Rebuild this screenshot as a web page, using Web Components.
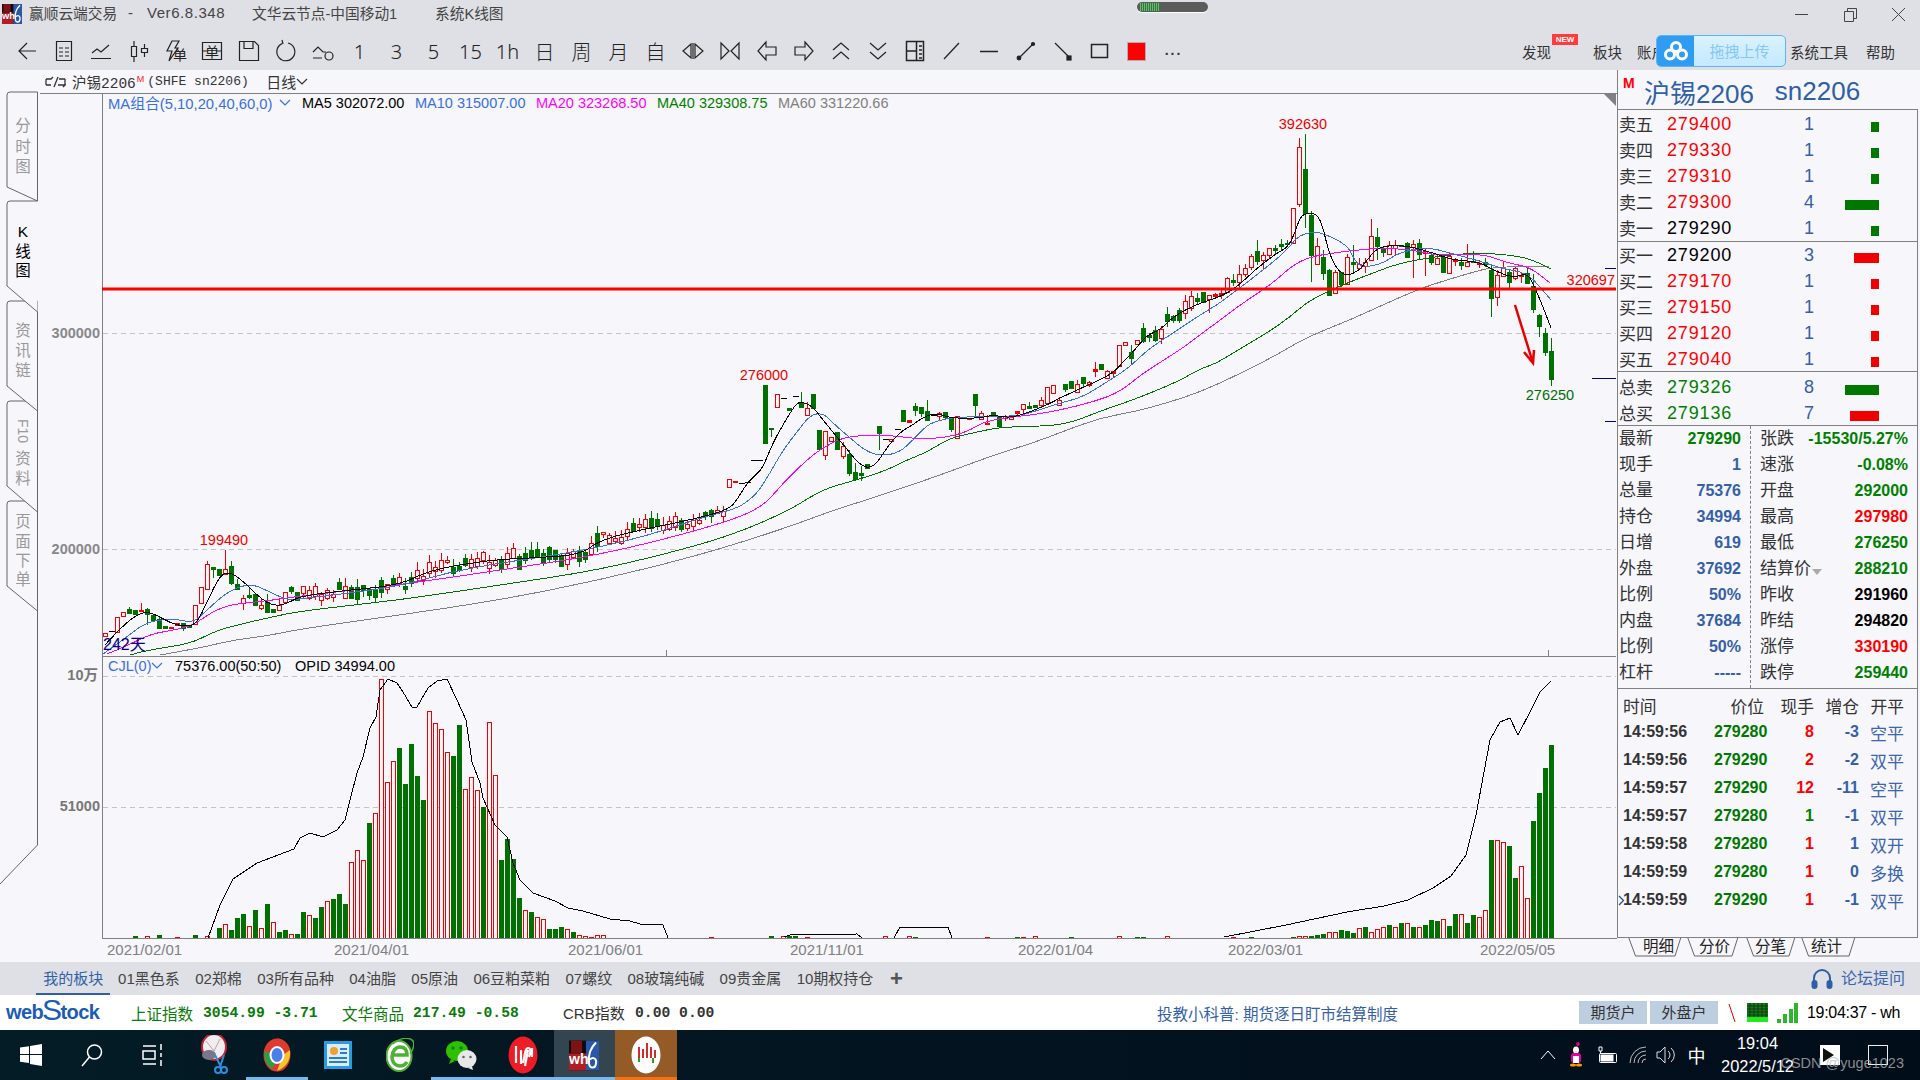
<!DOCTYPE html>
<html lang="zh">
<head>
<meta charset="utf-8">
<title>赢顺云端交易</title>
<style>
  html, body { margin: 0; padding: 0; }
  body {
    width: 1920px;
    height: 1080px;
    overflow: hidden;
    display: flex;
    flex-direction: column;
    background: #f6f6fb;
    font-family: "Liberation Sans", "Noto Sans CJK SC", sans-serif;
  }
  .work { display: flex; height: 892px; }
  .center { width: 1577px; display: flex; flex-direction: column; }
</style>
</head>
<body>
  <title-bar></title-bar>
  <tool-bar></tool-bar>
  <div class="work">
    <side-tabs></side-tabs>
    <div class="center">
      <symbol-bar></symbol-bar>
      <kline-chart></kline-chart>
    </div>
    <quote-panel></quote-panel>
  </div>
  <board-bar></board-bar>
  <status-bar></status-bar>
  <task-bar></task-bar>

<script>
const FONT = '"Liberation Sans", "Noto Sans CJK SC", sans-serif';

const WH_LOGO = (w, h) => `
  <svg width="${w}" height="${h}" viewBox="0 0 30 30">
    <rect width="30" height="30" fill="#0d0d10"/>
    <rect x="0" y="13" width="17" height="17" fill="#b01d22"/>
    <rect x="2" y="0" width="11" height="13" fill="#7a1216"/>
    <path d="M17 0h13v30H17z" fill="#2a57a8"/>
    <path d="M27 2c-5 5-8 12-7 20 0 6 6 7 7 1 1-5-3-7-6-4" fill="none" stroke="#fff" stroke-width="2"/>
    <text x="0" y="23" font-family="Liberation Sans" font-weight="700" font-size="14" fill="#fff">wh</text>
  </svg>`;

class TitleBar extends HTMLElement {
  constructor() {
    super();
    this.shadowDOM = this.attachShadow({ mode: 'open' });
  }

  connectedCallback() {
    this.render();
  }

  render() {
    this.shadowDOM.innerHTML = `
      <style>
        :host {
          display: flex;
          align-items: center;
          height: 35px;
          background: #dfe0e5;
          color: #444;
          font: 15px ${FONT};
          position: relative;
        }
        .logo { margin: -7px 7px 0 2px; display: flex; }
        .item { margin-top: -11px; white-space: nowrap; }
        .pill {
          position: absolute; left: 1137px; top: 2px;
          width: 71px; height: 10px; border-radius: 5px;
          background: #5b5b5b; display: flex; align-items: center; padding-left: 3px;
          box-sizing: border-box; box-shadow: 0 1px 1px #fff;
        }
        .pill i { width: 1px; height: 8px; background: #3fd452; margin-right: 1px; }
        .win { position: absolute; top: 7px; right: 15px; display: flex; }
        .win svg { display: block; }
      </style>
      <span class="logo">${WH_LOGO(20, 20)}</span>
      <span class="item" style="width:99px;font-size:14.7px">赢顺云端交易</span>
      <span class="item" style="width:19px">-</span>
      <span class="item" style="width:105px;letter-spacing:.55px">Ver6.8.348</span>
      <span class="item" style="width:183px;font-size:14.7px">文华云节点-中国移动1</span>
      <span class="item" style="font-size:14.7px">系统K线图</span>
      <div class="pill">${'<i></i>'.repeat(10)}</div>
      <div class="win">
        <svg width="110" height="16" viewBox="0 0 110 16" fill="none" stroke="#444">
          <path d="M0 7.5h13"/>
          <path d="M49.5 4.5h9v10h-9zM52.5 4.5v-3h9v10h-3"/>
          <path d="M97 1l13 13M110 1L97 14"/>
        </svg>
      </div>`;
  }
}
customElements.define('title-bar', TitleBar);

const ICONS = {
  back: '<path d="M21 12H4M12 4l-8 8 8 8"/>',
  list: '<path d="M4.500 2.500h15v19h-15zM7 9h4M13 9h4M7 13h4M13 13h4M7 17h4M13 17h4"/>',
  line: '<path d="M3 14l5-4 4 3 8-7M2 19.500h20"/>',
  candle: '<path d="M5.500 7.500h5v10h-5zM8 2v5M8 18v5M15.500 9.500h6v4h-6zM18.500 5v4M18.500 14v4"/>',
  flash: '<path d="M9 2h7l-4 7h3l-9 13 3-10H4z"/>',
  box: '<path d="M2.500 3.500h19v17h-19zM2.500 12H8M16 12h5.500"/>',
  save: '<path d="M2.500 2.500h15l4 4v15h-19zM7 2.500v7h9v-7M2.500 21.500h19"/>',
  refresh: '<path d="M14 4a9 9 0 1 1-6 .600M8 1l1 4"/>',
  swap: '<path d="M2 13l5-5 5 5h3M2 19h9"/><circle cx="18" cy="17" r="4"/>',
  tri1: '<path d="M10 5L2 12l8 7zM14 5l8 7-8 7zM12 4v16"/>',
  tri2: '<path d="M3 4l8 8-8 8zM21 4l-8 8 8 8z"/>',
  left: '<path d="M11 3l-8 9 8 9v-5h10V8H11z"/>',
  right: '<path d="M13 3l8 9-8 9v-5H3V8h10z"/>',
  up: '<path d="M4 11l8-7 8 7M4 20l8-7 8 7"/>',
  down: '<path d="M4 4l8 7 8-7M4 13l8 7 8-7"/>',
  split: '<path d="M3.500 2.500h17v19h-17zM13.500 2.500v19M3.500 12h10M16 7h3M16 11h3M16 15h3M16 19h3" stroke-width="1.500"/>',
  slash: '<path d="M4 20L19 4"/>',
  dash: '<path d="M3 12.500h18" stroke-width="1.500"/>',
  seg: '<path d="M5 19L19 5"/><circle cx="5" cy="19" r="1.800" fill="#222"/><circle cx="19" cy="5" r="1.500" fill="#222"/>',
  arrow: '<path d="M4 4l15 15"/><rect x="16" y="17" width="4" height="4" fill="#222"/>',
  rect: '<path d="M3.500 5.500h16v13h-16z" stroke-width="1.500"/>'
};

class ToolBar extends HTMLElement {
  constructor() {
    super();
    this.shadowDOM = this.attachShadow({ mode: 'open' });
  }

  connectedCallback() {
    this.render();
  }

  icon(name) {
    return `<div class="btn"><svg width="24" height="24" viewBox="0 0 24 24" fill="none" stroke="#222" stroke-width="1.200">${ICONS[name]}</svg></div>`;
  }

  glyph(name, inner) {
    return `<div class="btn"><svg width="24" height="24" viewBox="0 0 24 24" fill="none" stroke="#222" stroke-width="1.200">${ICONS[name]}<text x="${name === 'flash' ? 10 : 5}" y="${name === 'flash' ? 21 : 18}" font-size="14" font-family="Noto Sans CJK SC" fill="#222" stroke="none">${inner}</text></svg></div>`;
  }

  render() {
    const periods = ['1', '3', '5', '15', '1h', '日', '周', '月', '自'];
    const after = ['tri1', 'tri2', 'left', 'right', 'up', 'down', 'split', 'slash', 'dash', 'seg', 'arrow', 'rect'];
    this.shadowDOM.innerHTML = `
      <style>
        :host {
          display: flex;
          align-items: center;
          height: 35px;
          background: #dfe0e5;
          padding: 0 0 3px 8px;
          box-sizing: border-box;
          position: relative;
          color: #333;
        }
        .btn { width: 37px; height: 30px; display: flex; align-items: center; justify-content: center; flex: none; }
        .txt { font: 300 20px "Noto Sans", "Noto Sans CJK SC", sans-serif; color: #222; }
        .red { width: 17px; height: 17px; background: #ff0000; border: 1px solid #b0b0b0; }
        .dots { font: 700 14px ${FONT}; letter-spacing: 2px; margin-top: -2px; }
        .menu { margin-left: auto; display: flex; font: 14.5px ${FONT}; padding-right: 25px; }
        .menu span { white-space: nowrap; }
        .new {
          position: absolute; left: 1552px; top: -1px; width: 26px; height: 11px;
          background: #ff3b3b; color: #fff; font: 700 8px/11px ${FONT}; text-align: center;
        }
        .upload {
          position: absolute; left: 1656px; top: 0; width: 130px; height: 32px;
          box-sizing: border-box; border: 1px solid #5fb4f5; border-radius: 5px; background: linear-gradient(#d9f2ff, #c4e9ff);
          display: flex; overflow: hidden;
        }
        .upload .side { width: 37px; background: #2f9cf4; display: flex; align-items: center; justify-content: center; }
        .upload .label { flex: 1; color: #86c8f7; font: 15px ${FONT}; text-align: center; line-height: 31px; }
      </style>
      ${['back', 'list', 'line', 'candle'].map(n => this.icon(n)).join('')}
      ${this.glyph('flash', '单')}
      ${this.glyph('box', '单')}
      ${['save', 'refresh', 'swap'].map(n => this.icon(n)).join('')}
      ${periods.map(p => `<div class="btn txt">${p}</div>`).join('')}
      ${after.map(n => this.icon(n)).join('')}
      <div class="btn"><div class="red"></div></div>
      <div class="btn dots">...</div>
      <div class="menu">
        <span style="margin-right:42px">发现</span>
        <span style="margin-right:15px">板块</span>
        <span style="margin-right:124px">账户</span>
        <span style="margin-right:18px">系统工具</span>
        <span>帮助</span>
      </div>
      <div class="new">NEW</div>
      <div class="upload">
        <div class="side">
          <svg width="24" height="20" viewBox="0 0 24 20" fill="none" stroke="#fff" stroke-width="3">
            <circle cx="12" cy="6" r="4.500"/><circle cx="6" cy="13.500" r="4.500"/><circle cx="18" cy="13.500" r="4.500"/>
          </svg>
        </div>
        <div class="label">拖拽上传</div>
      </div>`;
  }
}
customElements.define('tool-bar', ToolBar);

class SideTabs extends HTMLElement {
  constructor() {
    super();
    this.shadowDOM = this.attachShadow({ mode: 'open' });
  }

  connectedCallback() {
    this.render();
  }

  tab(top, leftEnd, slantEnd, active) {
    const t = top - 70, l = leftEnd - 70, b = slantEnd - 70;
    const path = active
      ? `M37.500 ${t}H10q-3 0-3 3V${l}L37.500 ${b}`
      : `M37.500 ${b}V${t}H10q-3 0-3 3V${l}L37.500 ${b}`;
    return `<path d="${path}" fill="#f6f6fb" stroke="#666"/>`;
  }

  label(chars, active) {
    return chars.map(([c, y]) =>
      `<text x="23" y="${y - 70 + 6}" text-anchor="middle" font-size="15.500" font-family="Liberation Sans, Noto Sans CJK SC" fill="${active ? '#000' : '#999'}">${c}</text>`
    ).join('');
  }

  render() {
    this.shadowDOM.innerHTML = `
      <style>
        :host { display: block; width: 40px; height: 892px; flex: none; }
        svg { display: block; }
      </style>
      <svg width="40" height="892" viewBox="0 0 40 892">
        ${this.tab(92, 187, 201)}
        ${this.tab(501, 586, 611)}
        ${this.tab(401, 486, 512)}
        ${this.tab(301, 386, 411)}
        ${this.tab(201, 286, 312, true)}
        <path d="M37.500 541V775L0 814" fill="none" stroke="#666"/>
        ${this.label([['分', 125], ['时', 146], ['图', 166]])}
        ${this.label([['K', 231], ['线', 251], ['图', 270]], true)}
        ${this.label([['资', 330], ['讯', 350], ['链', 370]])}
        <text x="0" y="0" transform="translate(18 349) rotate(90)" font-size="14" font-family="Liberation Sans" fill="#999">F10</text>
        ${this.label([['资', 458], ['料', 478]])}
        ${this.label([['页', 521], ['面', 541], ['下', 560], ['单', 579]])}
      </svg>`;
  }
}
customElements.define('side-tabs', SideTabs);

class SymbolBar extends HTMLElement {
  constructor() {
    super();
    this.shadowDOM = this.attachShadow({ mode: 'open' });
  }

  connectedCallback() {
    this.render();
  }

  render() {
    this.shadowDOM.innerHTML = `
      <style>
        :host {
          display: flex;
          align-items: center;
          height: 24px;
          box-sizing: border-box;
          border-bottom: 1px solid #808080;
          padding-left: 5px;
          color: #333;
          font: 14.500px "Liberation Mono", "Noto Sans CJK SC", monospace;
          white-space: nowrap;
        }
        sup { color: #ff2020; font: 9px ${FONT}; margin: -6px 0 0 1px; }
        .mono { font-size: 13px; margin-left: 3px; width: 119px; }
        .per { font: 15px ${FONT}; }
      </style>
      <svg width="21" height="12" viewBox="0 0 21 12" fill="none" stroke="#333" stroke-width="1.300" style="margin-right:6px">
        <path d="M1 3h5l2-2M1 9h5M1 3v6M20 3v6M14 3h6M13 9h7l-2 2M9 11l4-10"/>
      </svg>
      <span>沪锡2206</span><sup>M</sup><span class="mono">(SHFE sn2206)</span>
      <span class="per">日线</span>
      <svg width="12" height="7" viewBox="0 0 12 7" fill="none" stroke="#333" stroke-width="1.200"><path d="M1 1l5 5 5-5"/></svg>`;
  }
}
customElements.define('symbol-bar', SymbolBar);

/* candles read off the reference, in crop units: [type, top, bottom, wickTop, wickBottom] */
const HEAD = [
  ['r',1470,1480],['d',1465,1465],['r',1430,1468],['r',1415,1426],['g',1408,1420,1402,1422],['g',1412,1422],
  ['f',1412,1414,1393,1415],['g',1408,1422,1405,1450],['g',1423,1437],['g',1435,1457,1430,1460],['g',1453,1457],
  ['r',1455,1459],['r',1444,1450],['g',1446,1458,1446,1465],['g',1450,1455],['r',1398,1448],['r',1352,1392],
  ['r',1292,1357,1282,1357],['g',1298,1305,1298,1328],['g',1304,1320],['r',1303,1318,1253,1320],['g',1297,1340,1282,1345],
  ['g',1343,1355,1330,1360],['r',1379,1394,1372,1410],['g',1373,1378,1350,1382],['g',1370,1398],['r',1398,1405,1380,1410],
  ['g',1391,1415,1370,1418],['g',1408,1415],['r',1398,1410,1380,1410],['r',1363,1390],['g',1352,1362,1348,1370],['g',1363,1385]
];
const MIDDLE = [
  ['r',388,412],['f',392,395],['d',400,400],['d',395,395],['d',330,330],['d',330,330],['g',105,278],['g',234,238,234,260],
  ['r',133,172],['d',145,145],['g',174,179],['d',139,139],['g',155,171,127,171],['r',175,196,155,197],['g',132,175,132,178],
  ['g',240,296],['r',244,316,244,330],['r',262,272],['g',246,296],['r',289,319,275,328],['g',312,368,300,378],
  ['g',366,388,340,390],['g',369,374,348,392],['g',342,353],null,['g',228,248,228,300],['d',268,268],['r',268,274],
  ['d',238,238],['g',180,212],['f',210,215],['g',168,179,158,198],['g',171,188,171,200],['g',183,210,150,213],['d',195,195],
  ['r',188,197,185,210],['g',187,200,185,210],['g',205,236,200,246],['r',199,265,198,267],['d',205,205],['f',203,207],
  ['g',132,164,132,200],['r',188,208,182,210],['f',218,220,195,222],['g',187,194],['g',197,228],['r',197,203,195,212],
  ['r',202,208],['f',184,188,184,200],['r',163,178,163,188],['g',168,173,155,178],['g',165,172],['r',150,166,140,170],
  ['r',112,158],['r',106,130],['r',149,165,140,168],['g',102,117,102,127],['g',94,113],['r',103,127,90,128],['g',81,98,81,112],
  ['r',97,105,93,110],['f',58,62,37,80],['g',42,57],['r',64,85,60,87],['f',64,68,64,85],['r',-15,47],['r',-25,-15]
];
const TAIL = [
  ['g',547,575],['r',555,568,555,610],['f',553,557,548,568],['f',549,555,540,566],['r',503,545,500,548],['g',511,515,492,528],
  ['r',493,516,465,530],['r',475,491,463,500],['r',439,472,432,480],['g',424,454,390,465],['r',436,449,425,480],['r',415,436,413,445],
  ['g',414,419,405,435],['g',403,407,388,422],['g',399,403,390,410],['r',295,400,293,402],['r',112,283,85,290],['g',177,310,72,355],
  ['g',315,435,302,515],['r',409,463,385,465],['g',441,490,420,510],['g',480,554,478,556],['r',487,550,480,552],['g',487,522,485,530],
  ['r',442,521,433,525],['g',456,461,405,485],['r',461,475,445,480],['r',455,467,445,488],['r',379,451,327,453],['g',381,408,353,450],
  ['g',417,425,410,440],['r',405,433,392,435],['r',404,414,390,437],['g',404,408],['g',399,440,395,442],['r',401,411,390,503],
  ['g',400,431,388,447],['r',424,430,418,497],['g',435,455,430,465],['r',444,463,435,465],['g',442,487,435,490],['r',439,490,428,492],
  ['f',448,453,443,468],['g',455,464,445,480],['r',456,469,402,470],['g',452,457,422,460],['f',459,463,450,475],['g',456,463,445,470],
  ['g',480,563,465,620],['r',496,562,480,588],['r',470,497,455,500],['g',487,515,480,535],['r',475,503,468,510],['f',495,499,485,520],
  ['g',490,518,468,520],['g',527,598,492,610],['g',615,647,612,680],['g',670,725,655,737],['g',723,806,685,828]
];

const MA5 = [[105,645],[123,625],[143,611],[157,615],[170,623],[187,627],[197,623],[207,602],[220,575],[230,572],[243,581],[260,598],[273,606],[287,604],[300,596],[350,590],[400,585],[430,570],[490,560],[530,558],[580,555],[600,540],[640,530],[690,520],[728,510],[737,500],[747,483],[757,474],[763,467],[773,443],[780,430],[790,413],[797,403],[803,402],[813,407],[823,420],[837,437],[850,453],[860,465],[873,469],[890,443],[903,430],[913,425],[923,417],[937,413],[950,418],[967,418],[980,418],[993,415],[1010,418],[1027,413],[1047,405],[1060,398],[1077,390],[1093,383],[1113,373],[1123,362],[1133,352],[1147,335],[1160,330],[1175,315],[1200,303],[1220,297],[1237,287],[1257,268],[1277,253],[1288,247],[1295,233],[1300,217],[1307,213],[1317,214],[1323,227],[1328,250],[1337,270],[1347,276],[1360,270],[1367,260],[1377,248],[1393,245],[1413,247],[1433,253],[1453,260],[1480,262],[1493,270],[1513,278],[1527,273],[1533,283],[1543,307],[1551,328]];
const MA10 = [[103,654],[123,640],[147,621],[177,619],[193,623],[207,610],[227,592],[250,583],[270,592],[287,600],[300,599],[350,593],[400,586],[450,572],[500,563],[550,556],[600,547],[650,535],[700,518],[735,509],[747,502],[758,492],[770,473],[783,450],[797,432],[810,415],[823,413],[833,423],[850,438],[867,452],[883,456],[900,452],[913,440],[927,425],[940,420],[957,417],[977,417],[1000,416],[1017,416],[1033,412],[1060,403],[1083,397],[1110,380],[1130,367],[1147,350],[1170,335],[1200,315],[1217,305],[1237,290],[1267,267],[1287,250],[1297,237],[1310,232],[1323,233],[1347,245],[1353,257],[1360,267],[1380,265],[1400,252],[1427,247],[1450,253],[1483,262],[1500,268],[1527,273],[1540,287],[1551,300]];
const MA20 = [[107,654],[127,646],[150,634],[180,629],[197,623],[213,611],[233,604],[267,601],[300,596],[400,585],[500,570],[600,555],[700,530],[760,510],[783,483],[810,457],[823,448],[843,437],[873,435],[897,436],[917,439],[943,438],[967,432],[983,422],[1010,417],[1033,415],[1060,410],[1093,402],[1120,392],[1143,373],[1180,350],[1200,335],[1220,320],[1243,303],[1273,283],[1293,265],[1310,257],[1333,253],[1357,250],[1383,248],[1413,250],[1433,255],[1460,254],[1487,255],[1507,263],[1530,267],[1550,283]];
const MA40 = [[130,655],[147,650],[190,644],[213,632],[233,626],[263,619],[300,611],[400,600],[500,585],[600,570],[700,545],[750,528],[793,508],[810,497],[830,487],[857,480],[887,470],[907,460],[927,452],[950,438],[973,433],[1000,427],[1050,426],[1073,422],[1103,410],[1133,400],[1177,382],[1200,369],[1217,363],[1233,353],[1267,333],[1290,317],[1307,302],[1327,292],[1347,283],[1373,273],[1397,264],[1427,258],[1457,254],[1487,253],[1517,256],[1533,260],[1551,269]];
const MA60 = [[160,655],[200,648],[233,640],[267,636],[300,629],[400,615],[500,600],[600,580],[700,555],[780,530],[837,509],[860,502],[887,493],[917,483],[940,475],[967,465],[1000,453],[1033,443],[1067,430],[1100,418],[1133,412],[1167,403],[1200,392],[1233,377],[1273,357],[1307,337],[1350,320],[1387,303],[1417,290],[1437,283],[1470,273],[1493,267],[1550,266]];

/* volume bars from k=33, [type, topInCrop] */
const VOLS = [
  ['g',756],['r',766],['g',774],['g',741],['r',724],['g',717],['g',702],['g',732],['r',607],['r',571],['r',601],['g',489],['r',460],
  ['r',58],['r',367],['r',304],['g',264],['g',372],['g',252],['g',348],['g',420],['r',154],['r',190],['r',208],['r',277],['g',288],
  ['g',195],['r',388],['r',352],['r',391],['g',441],['r',187],['r',346],['g',600],['g',537],['g',597],['g',714],['r',751],['g',756],
  ['r',772],['r',778],['g',807],['g',807],['g',801],['r',808],['g',816],['r',826],['r',829],['r',832],['r',826],['r',826]
];
const VOL_HEAD = [[5,'g',2],[7,'r',2],[9,'g',3],[12,'r',1],[15,'g',3],[17,'r',2],[19,'g',10],[20,'r',14],[21,'g',8],[22,'g',20],[23,'g',24],[24,'r',12],[25,'g',28],[26,'r',10],[27,'g',34],[28,'r',16],[29,'g',6],[30,'g',8],[31,'r',4],[32,'g',4]];
const VOL_END = [[231,'g',98],[232,'r',98],[233,'r',96],[234,'g',92],[235,'g',60],[236,'r',72],[237,'r',40],[238,'g',117],[239,'g',145],[240,'g',170],[241,'g',193]];
const OI_LINES = [
  [[208,938],[220,905],[233,879],[257,863],[294,849],[300,838],[310,833],[323,837],[337,830],[345,820],[350,800],[357,773],[363,757],[370,728],[376,717],[380,690],[388,679],[397,683],[403,692],[412,707],[417,707],[428,688],[437,681],[447,679],[457,700],[466,720],[472,762],[480,783],[483,798],[495,825],[507,837],[513,863],[520,880],[533,893],[555,901],[568,908],[583,911],[610,919],[630,921],[640,924],[663,925],[668,938]],
  [[784,937],[790,935],[857,934],[862,938]],
  [[894,938],[900,927],[948,927],[952,938]],
  [[1224,937],[1286,925],[1347,912],[1384,906],[1408,900],[1433,888],[1451,876],[1466,855],[1476,815],[1490,740],[1500,722],[1510,718],[1518,735],[1531,710],[1540,692],[1551,681]]
];

class KlineChart extends HTMLElement {
  constructor() {
    super();
    this.shadowDOM = this.attachShadow({ mode: 'open' });
    this.seed = 11;
  }

  connectedCallback() {
    this.render();
  }

  rnd() {
    this.seed = (this.seed * 16807) % 2147483647;
    return this.seed / 2147483647;
  }

  at(points, x) {
    for (let i = 1; i < points.length; i++) {
      if (x <= points[i][0]) {
        const [x0, y0] = points[i - 1], [x1, y1] = points[i];
        return y0 + (y1 - y0) * (x - x0) / (x1 - x0);
      }
    }
    return points[points.length - 1][1];
  }

  curve(points) {
    let d = `M${points[0][0]} ${points[0][1]}`;
    for (let i = 1; i < points.length - 1; i++) {
      const mx = (points[i][0] + points[i + 1][0]) / 2, my = (points[i][1] + points[i + 1][1]) / 2;
      d += `Q${points[i][0]} ${points[i][1]} ${mx} ${my}`;
    }
    const last = points[points.length - 1];
    return d + `L${last[0]} ${last[1]}`;
  }

  candle(k, c) {
    const x = 105.5 + 6 * k;
    const [t, top, bottom, wt, wb] = c;
    const y0 = Math.round(top), y1 = Math.max(Math.round(bottom), y0 + 1);
    if (t === 'd') return `<path d="M${x - 3} ${y0 + .5}h6" stroke="#000" fill="none"/>`;
    const col = t === 'g' ? '#007000' : '#f00000';
    let out = '';
    if (wt !== undefined) out += `<path d="M${x} ${Math.round(wt)}V${Math.round(wb)}" stroke="${col}" fill="none"/>`;
    if (t === 'r') out += `<rect x="${x - 2}" y="${y0 + .5}" width="4" height="${y1 - y0}" fill="#f6f6fb" stroke="${col}"/>`;
    else out += `<rect x="${x - 2.5}" y="${y0}" width="5" height="${y1 - y0 + 1}" fill="${col}"/>`;
    return out;
  }

  candles() {
    let out = '';
    const map = (c, f) => c && [c[0], f(c[1]), f(c[2]), c[3] === undefined ? undefined : f(c[3]), c[3] === undefined ? undefined : f(c[4])];
    const fake = k => {
      const x = 105.5 + 6 * k;
      const cy = this.at(MA5, x) + (this.rnd() - .5) * 12;
      const h = 2 + this.rnd() * 11;
      const up = this.rnd() < .55;
      const w1 = this.rnd() * 8, w2 = this.rnd() * 7;
      return [up ? 'r' : 'g', cy - h / 2, cy + h / 2, cy - h / 2 - w1, cy + h / 2 + w2];
    };
    for (let k = 0; k < 242; k++) {
      let c;
      if (k < HEAD.length) c = map(HEAD[k], v => v / 2.613 + 70);
      else if (k >= 104 && k - 104 < MIDDLE.length) c = map(MIDDLE[k - 104], v => v / 3 + 350);
      else if (k >= 183) c = map(TAIL[k - 183], v => v / 3 + 110);
      else c = fake(k);
      if (c) out += this.candle(k, c);
    }
    return out;
  }

  volumes() {
    let out = '';
    const bar = (k, t, h) => {
      if (h < 1) return '';
      const x = 105.5 + 6 * k, top = Math.round(938 - h);
      const col = t === 'g' ? '#007000' : '#f00000';
      return t === 'r'
        ? `<rect x="${x - 2}" y="${top + .5}" width="4" height="${938 - top}" fill="#f6f6fb" stroke="${col}"/>`
        : `<rect x="${x - 2.5}" y="${top}" width="5" height="${938 - top}" fill="${col}"/>`;
    };
    VOL_HEAD.forEach(([k, t, h]) => { out += bar(k, t, h); });
    VOLS.forEach(([t, z], i) => { out += bar(33 + i, t, (835 - z) / 3); });
    for (let k = 100; k < 231; k++) {
      const r = this.rnd();
      const max = k > 196 ? (k - 196) * .85 : (r > .82 ? 2 : 0);
      out += bar(k, this.rnd() < .5 ? 'r' : 'g', max * (.4 + .6 * this.rnd()));
    }
    VOL_END.forEach(([k, t, h]) => { out += bar(k, t, h); });
    return out;
  }

  text(x, y, s, col, anchor = 'start', extra = '') {
    return `<text x="${x}" y="${y}" fill="${col}" text-anchor="${anchor}" ${extra}>${s}</text>`;
  }

  render() {
    const dates = [[107, '2021/02/01'], [334, '2021/04/01'], [568, '2021/06/01'], [790, '2021/11/01'], [1018, '2022/01/04'], [1228, '2022/03/01'], [1480, '2022/05/05']];
    const lines = [[MA60, '#808080'], [MA40, '#007000'], [MA20, '#ff00ff'], [MA10, '#3a6fe0'], [MA5, '#000']];
    const legend = [[301, 102, 'MA5 302072.00', '#000'], [414, 111, 'MA10 315007.00', '#3a6fe0'], [535, 111, 'MA20 323268.50', '#ff00ff'], [656, 111, 'MA40 329308.75', '#008000'], [777, 111, 'MA60 331220.66', '#808080']];
    this.shadowDOM.innerHTML = `
      <style>
        :host { display: block; width: 1577px; height: 868px; position: relative; }
        svg { display: block; font: 14.500px ${FONT}; }
        .lg {
          position: absolute; top: 0; left: 68px; height: 17px; display: flex; align-items: center;
          font: 14.500px ${FONT}; white-space: nowrap;
        }
        .lg2 { top: 563px; }
      </style>
      <svg width="1577" height="868" viewBox="40 94 1577 868">
        <g stroke="#c4c4c4" stroke-dasharray="5 4" fill="none">
          <path d="M103 333.500H1616M103 549.500H1616M103 676.500H1616M103 807.500H1616"/>
        </g>
        <g shape-rendering="crispEdges">${this.candles()}</g>
        <g fill="none" stroke-width="1" shape-rendering="crispEdges">
          ${lines.map(([p, c]) => `<path d="${this.curve(p)}" stroke="${c}"/>`).join('')}
        </g>
        <g shape-rendering="crispEdges">${this.volumes()}</g>
        <g fill="none" stroke="#000" stroke-width="1" shape-rendering="crispEdges">
          ${OI_LINES.map(p => `<polyline points="${p.map(q => q.join(',')).join(' ')}"/>`).join('')}
        </g>
        <path d="M102.500 93V938M102 656.500H1616M102 938.500H1617" stroke="#808080" fill="none"/>
        <path d="M666.500 650v6M1548.500 650v6" stroke="#808080" fill="none"/>
        <path d="M102 289H1616" stroke="#ff0000" stroke-width="3"/>
        <path d="M1605 268.500h11M1592 378.500h24M1605 421.500h11" stroke="#000080"/>
        <path d="M1515 305L1533 363M1524 352l9 11 1-13" fill="none" stroke="#e80000" stroke-width="2.500"/>
        <path d="M1604 94h12v12z" fill="#808080"/>
        ${this.text(100, 338, '300000', '#888', 'end', 'font-weight="700"')}
        ${this.text(100, 554, '200000', '#888', 'end', 'font-weight="700"')}
        ${this.text(98, 680, '10万', '#777', 'end', 'font-weight="700"')}
        ${this.text(100, 811, '51000', '#777', 'end', 'font-weight="700"')}
        ${this.text(1303, 129, '392630', '#f00000', 'middle')}
        ${this.text(764, 380, '276000', '#f00000', 'middle')}
        ${this.text(224, 545, '199490', '#f00000', 'middle')}
        ${this.text(1550, 400, '276250', '#007000', 'middle')}
        ${this.text(1615, 285, '320697', '#f00000', 'end')}
        ${this.text(103, 650, '242天', '#000080', 'start', 'font-size="16"')}
        ${dates.map(([x, s]) => this.text(x, 955, s, '#808080', 'start', 'font-size="15"')).join('')}
      </svg>
      <div class="lg">
        <span style="color:#3a6fe0;width:171px;font-size:14.800px">MA组合(5,10,20,40,60,0)</span>
        <svg width="12" height="7" viewBox="0 0 12 7" fill="none" stroke="#3a6fe0" stroke-width="1.200" style="margin-right:11px"><path d="M1 1l5 5 5-5"/></svg>
        ${legend.map(([x, w, s, c]) => `<span style="color:${c};width:${w}px;margin-right:${x === 301 ? 11 : 10}px">${s}</span>`).join('')}
      </div>
      <div class="lg lg2">
        <span style="color:#3a6fe0;width:43px">CJL(0)</span>
        <svg width="12" height="7" viewBox="0 0 12 7" fill="none" stroke="#3a6fe0" stroke-width="1.200" style="margin-right:12px"><path d="M1 1l5 5 5-5"/></svg>
        <span style="color:#000;width:120px">75376.00(50:50)</span>
        <span style="color:#000">OPID 34994.00</span>
      </div>`;
  }
}
customElements.define('kline-chart', KlineChart);

class QuotePanel extends HTMLElement {
  constructor() {
    super();
    this.shadowDOM = this.attachShadow({ mode: 'open' });
  }

  connectedCallback() {
    this.render();
  }

  bookRow(label, price, color, qty, barColor, barWidth) {
    return `
      <div class="book">
        <span class="lb">${label}</span>
        <span class="pr" style="color:${color}">${price}</span>
        <span class="qt">${qty}</span>
        <span class="bar"><i style="width:${barWidth}px;background:${barColor}"></i></span>
      </div>`;
  }

  render() {
    const R = '#ff0000', G = '#008000', K = '#000', B = '#3560a8';
    const sell = [['卖五', 279400, R, 1, 8], ['卖四', 279330, R, 1, 8], ['卖三', 279310, R, 1, 8], ['卖二', 279300, R, 4, 34], ['卖一', 279290, K, 1, 8]];
    const buy = [['买一', 279200, K, 3, 25], ['买二', 279170, R, 1, 8], ['买三', 279150, R, 1, 8], ['买四', 279120, R, 1, 8], ['买五', 279040, R, 1, 8]];
    const stats = [
      ['最新', '279290', G, '张跌', '-15530/5.27%', G], ['现手', '1', B, '速涨', '-0.08%', G],
      ['总量', '75376', B, '开盘', '292000', G], ['持仓', '34994', B, '最高', '297980', R],
      ['日增', '619', B, '最低', '276250', G], ['外盘', '37692', B, '结算价<i class="tri"></i>', '288210', G],
      ['比例', '50%', B, '昨收', '291960', K], ['内盘', '37684', B, '昨结', '294820', K],
      ['比例', '50%', B, '涨停', '330190', R], ['杠杆', '-----', B, '跌停', '259440', G]
    ];
    const trades = [
      ['14:59:56', '279280', '8', R, '-3', '空平'], ['14:59:56', '279290', '2', R, '-2', '双平'],
      ['14:59:57', '279290', '12', R, '-11', '空平'], ['14:59:57', '279280', '1', G, '-1', '双平'],
      ['14:59:58', '279280', '1', R, '1', '双开'], ['14:59:59', '279280', '1', R, '0', '多换'],
      ['14:59:59', '279290', '1', R, '-1', '双平']
    ];
    const tabs = [['明细', 10, 56, 31], ['分价', 69, 54, 28], ['分笔', 128, 52, 25], ['统计', 183, 57, 26]];
    this.shadowDOM.innerHTML = `
      <style>
        :host {
          display: flex;
          flex-direction: column;
          width: 303px;
          height: 892px;
          flex: none;
          font: 17px ${FONT};
          color: #333;
        }
        .head {
          height: 39px; box-sizing: border-box; border-left: 1px solid #808080; position: relative;
          display: flex; align-items: center; padding: 3px 0 0 26px; color: #2f5fa5; font-size: 26px; white-space: nowrap;
        }
        .head b { position: absolute; left: 5px; top: 5px; color: #f00; font-size: 14px; }
        .head span { margin-left: 21px; }
        .box {
          height: 829px; margin-right: 2px; box-sizing: border-box;
          border: 1px solid #808080; border-width: 1px 1px 1px 1px;
          display: flex; flex-direction: column;
        }
        .sec { box-sizing: border-box; border-bottom: 1px solid #808080; flex: none; overflow: hidden; }
        .book { display: flex; align-items: center; height: 26px; white-space: nowrap; }
        .book .lb { width: 49px; padding-left: 1px; box-sizing: border-box; margin-top: -2px; }
        .book .pr { width: 137px; font-size: 18px; letter-spacing: .85px; }
        .book .qt { width: 30px; color: ${B}; font-size: 18px; }
        .book .bar { width: 45px; display: flex; justify-content: flex-end; padding-top: 11px; box-sizing: border-box; height: 26px; }
        .book .bar i { height: 10px; display: block; }
        .stats { display: grid; grid-template-columns: 132px 1fr; height: 263px; }
        .col { padding-bottom: 2px; }
        .col + .col { border-left: 1px dashed #808080; }
        .st { display: flex; justify-content: space-between; height: 26px; line-height: 25px; white-space: nowrap; }
        .col:first-child .st { padding: 0 9px 0 1px; }
        .col + .col .st { padding: 0 9px 0 9px; }
        .st b { font-size: 16px; }
        .tri {
          display: inline-block; width: 0; height: 0; margin-left: 1px;
          border: 5px solid transparent; border-top: 6px solid #aaa; border-bottom: 0; vertical-align: -1px;
        }
        .trades { flex: 1; }
        .tr { display: flex; white-space: nowrap; align-items: center; }
        .tr.hd { height: 29px; font-size: 16.800px; padding-top: 4px; box-sizing: border-box; }
        .tr.row { height: 28px; }
        .tr .a { width: 96px; padding-left: 5px; box-sizing: border-box; position: relative; }
        .tr .b { width: 50px; text-align: right; }
        .tr .c, .tr .d { width: 45px; text-align: right; }
        .tr.row b { font-size: 16px; }
        .cur { position: absolute; left: 0; top: 5px; }
        .tabs { height: 24px; position: relative; flex: none; display: flex; margin-top: -1px; }
        .tab { position: absolute; top: 0; height: 20px; line-height: 19px; font-size: 15.500px; color: #222; }
        .tab svg { position: absolute; left: 0; top: 0; z-index: -1; }
        .tab span { position: absolute; top: 0; white-space: nowrap; }
      </style>
      <div class="head"><b>M</b>沪锡2206<span>sn2206</span></div>
      <div class="box">
        <div class="sec" style="height:132px;padding-top:1px">
          ${sell.map(([l, p, c, q, w]) => this.bookRow(l, p, c, q, '#007800', w)).join('')}
        </div>
        <div class="sec" style="height:130px">
          ${buy.map(([l, p, c, q, w]) => this.bookRow(l, p, c, q, '#f00000', w)).join('')}
        </div>
        <div class="sec" style="height:54px;padding-top:2px">
          ${this.bookRow('总卖', 279326, G, 8, '#007800', 34)}
          ${this.bookRow('总买', 279136, G, 7, '#f00000', 29)}
        </div>
        <div class="sec stats">
          <div class="col">
            ${stats.map(s => `<div class="st"><span>${s[0]}</span><b style="color:${s[2]}">${s[1]}</b></div>`).join('')}
          </div>
          <div class="col">
            ${stats.map(s => `<div class="st"><span>${s[3]}</span><b style="color:${s[5]}">${s[4]}</b></div>`).join('')}
          </div>
        </div>
        <div class="trades">
          <div class="tr hd">
            <span class="a">时间</span>
            <span class="b">价位</span>
            <span class="b">现手</span>
            <span class="c">增仓</span>
            <span class="d">开平</span>
          </div>
          ${trades.map(([t, p, q, qc, d, o], i) => `
            <div class="tr row">
              <span class="a">${i === 6 ? '<svg class="cur" width="7" height="11" viewBox="0 0 7 11" fill="none" stroke="#24508f" stroke-width="1.300"><path d="M1 1l4.500 4.500L1 10"/></svg>' : ''}<b>${t}</b></span>
              <span class="b"><b style="color:#007800">${p}</b></span>
              <span class="b"><b style="color:${qc}">${q}</b></span>
              <span class="c"><b style="color:${B}">${d}</b></span>
              <span class="d" style="color:#3d66ad">${o}</span>
            </div>`).join('')}
        </div>
      </div>
      <div class="tabs">
        ${tabs.map(([n, x, w, tx], i) => `
          <div class="tab" style="left:${x}px;width:${w}px">
            <svg width="${w}" height="20" viewBox="0 0 ${w} 20" fill="none" stroke="#666"><path d="M1.500 0l7 19H${w - 8}l6-19"/></svg>
            <span style="left:${tx - 15}px">${n}</span>
          </div>`).join('')}
      </div>`;
  }
}
customElements.define('quote-panel', QuotePanel);

class BoardBar extends HTMLElement {
  constructor() {
    super();
    this.shadowDOM = this.attachShadow({ mode: 'open' });
  }

  connectedCallback() {
    this.render();
  }

  render() {
    const tabs = ['01黑色系', '02郑棉', '03所有品种', '04油脂', '05原油', '06豆粕菜粕', '07螺纹', '08玻璃纯碱', '09贵金属', '10期权持仓'];
    this.shadowDOM.innerHTML = `
      <style>
        :host {
          display: flex;
          height: 33px;
          background: #dfe0e5;
          padding-left: 36px;
          box-sizing: border-box;
          font: 15px ${FONT};
          color: #444;
        }
        div { padding: 0 7.700px; line-height: 33px; white-space: nowrap; }
        .on { color: #2f5fa5; box-shadow: inset 0 -2px 0 #2f5fa5; padding: 0 7.200px; }
        .plus { font-size: 22px; font-weight: 700; color: #555; padding: 0 0 0 9px; }
        .help { margin-left: auto; display: flex; align-items: center; color: #3d66ad; padding: 0 15px 0 0; font-size: 16px; gap: 8px; }
      </style>
      <div class="on">我的板块</div>
      ${tabs.map(t => `<div>${t}</div>`).join('')}
      <div class="plus">+</div>
      <div class="help">
        <svg width="22" height="22" viewBox="0 0 22 22" fill="none" stroke="#2f5fa5" stroke-width="2">
          <path d="M3 14V10a8 8 0 0 1 16 0v4"/><rect x="1.500" y="13" width="4" height="7" rx="2" fill="#2f5fa5"/><rect x="16.500" y="13" width="4" height="7" rx="2" fill="#2f5fa5"/>
        </svg>
        论坛提问
      </div>`;
  }
}
customElements.define('board-bar', BoardBar);

class StatusBar extends HTMLElement {
  constructor() {
    super();
    this.shadowDOM = this.attachShadow({ mode: 'open' });
  }

  connectedCallback() {
    this.render();
  }

  render() {
    this.shadowDOM.innerHTML = `
      <style>
        :host {
          display: flex;
          align-items: center;
          height: 35px;
          background: #fff;
          font: 15.500px ${FONT};
          white-space: nowrap;
        }
        .logo { width: 83px; margin-left: 6px; color: #1c5cb5; font: 700 20px "Liberation Sans", sans-serif; letter-spacing: -.6px; display: flex; align-items: center; }
        .logo i { font-style: normal; font-size: 30px; font-weight: 400; margin: -6px -1px 0; }
        .n { font: 700 14.700px "Liberation Mono", monospace; }
        .g { color: #0a7a0a; }
        .tag { width: 68px; height: 23px; line-height: 23px; text-align: center; background: #bccee0; color: #333; font-size: 15px; margin-right: 3px; }
      </style>
      <div class="logo">web<i>S</i>tock</div>
      <span class="g" style="margin-left:42px;width:72px">上证指数</span>
      <span class="n g" style="width:139px">3054.99 -3.71</span>
      <span class="g" style="width:71px">文华商品</span>
      <span class="n g" style="width:150px">217.49 -0.58</span>
      <span style="width:72px;color:#333;font-size:15px">CRB指数</span>
      <span class="n" style="width:522px;color:#333">0.00 0.00</span>
      <span style="color:#3560a8;width:422px;font-size:15.500px">投教小科普:&nbsp;期货逐日盯市结算制度</span>
      <span class="tag">期货户</span>
      <span class="tag" style="margin-right:10px">外盘户</span>
      <svg width="8" height="20" viewBox="0 0 8 20" fill="none" stroke="#e00000" style="margin-right:11px"><path d="M1 1l6 18"/></svg>
      <svg width="21" height="19" viewBox="0 0 21 19" style="margin-right:9px">
        <rect width="21" height="19" fill="#1a7a1a"/>
        <path d="M0 3h21M0 6h21M0 9h21M0 12h21M3 0v14M7 0v14M11 0v14M15 0v14M19 0v14" stroke="#0c3d0c"/>
        <rect y="14" width="21" height="5" fill="#22e822"/>
      </svg>
      <svg width="21" height="20" viewBox="0 0 21 20" fill="#2fb52f" style="margin-right:9px">
        <rect x="0" y="16" width="4" height="4"/><rect x="6" y="11" width="4" height="9"/><rect x="12" y="6" width="4" height="14"/><rect x="17" y="0" width="4" height="20"/>
      </svg>
      <span style="color:#000;font-size:16px;letter-spacing:-.3px">19:04:37 - wh</span>`;
  }
}
customElements.define('status-bar', StatusBar);

class TaskBar extends HTMLElement {
  constructor() {
    super();
    this.shadowDOM = this.attachShadow({ mode: 'open' });
  }

  connectedCallback() {
    this.render();
  }

  render() {
    const cells = [
      ['', `<svg width="22" height="22" viewBox="0 0 22 22" fill="#fff"><path d="M0 3.500l9-1.300V10H0zM10 2l12-2v10H10zM0 11h9v8L0 17.800zM10 11h12v11l-12-2z"/></svg>`],
      ['', `<svg width="24" height="24" viewBox="0 0 24 24" fill="none" stroke="#fff" stroke-width="1.500"><circle cx="14.500" cy="9" r="7"/><path d="M9.500 14L2 23"/></svg>`],
      ['', `<svg width="24" height="24" viewBox="0 0 24 24" fill="none" stroke="#fff" stroke-width="1.500"><path d="M1 3h13M1 21h13M1 8h12v8H1zM19 1v6M19 10v4M19 17v6"/></svg>`],
      ['', `<svg width="30" height="40" viewBox="0 0 30 40"><ellipse cx="14" cy="12" rx="12" ry="13" fill="#eee" stroke="#c23" stroke-width="2"/><path d="M6 6l8 10 6-12" stroke="#c9a" fill="none"/><ellipse cx="9" cy="20" rx="7" ry="5" fill="#778"/><path d="M15 20l6 12M24 20l-4 12" stroke="#2a8fe0" stroke-width="2"/><circle cx="18" cy="35" r="3" fill="none" stroke="#2a8fe0" stroke-width="2"/><circle cx="24" cy="35" r="3" fill="none" stroke="#2a8fe0" stroke-width="2"/></svg>`],
      ['line', `<svg width="28" height="34" viewBox="0 0 28 34"><ellipse cx="14" cy="17" rx="13.500" ry="16.500" fill="#dd3b2d"/><path d="M1.500 13A13.500 16.500 0 0 0 9 31l7-12z" fill="#2e9e45"/><path d="M14 .5c6 0 11 4 13 11H14z" fill="#dd3b2d"/><path d="M27 12c1 9-3 17-13 21l6-16z" fill="#f7c52b"/><ellipse cx="14" cy="17" rx="7.500" ry="9" fill="#fff"/><ellipse cx="14" cy="17" rx="5.500" ry="7" fill="#4a80ec"/></svg>`],
      ['', `<svg width="28" height="28" viewBox="0 0 28 28"><rect width="28" height="28" fill="#2b9ce0"/><rect x="3" y="3" width="22" height="22" fill="#d8edf8"/><circle cx="10" cy="10" r="4" fill="#f0a030"/><path d="M16 8h7M16 12h7M5 17h18M5 21h18" stroke="#2b7cc0" stroke-width="2"/></svg>`],
      ['', `<svg width="28" height="34" viewBox="0 0 28 34"><ellipse cx="13" cy="18" rx="12.500" ry="15" fill="#fff" stroke="#4fb037" stroke-width="2"/><path d="M6 17h15c0-6-3-8-7-8s-8 4-8 10 4 9 8 9c3 0 5-1 7-4" fill="none" stroke="#4fb037" stroke-width="3.500"/><path d="M7 6C14-1 24-1 27 3c2 3 0 9-3 13" fill="none" stroke="#4fb037" stroke-width="1.500"/></svg>`],
      ['line', `<svg width="32" height="32" viewBox="0 0 32 32"><ellipse cx="12" cy="12" rx="11" ry="10" fill="#2dc100"/><path d="M6 20l-2 5 6-3z" fill="#2dc100"/><circle cx="8" cy="9" r="1.800" fill="#083"/><circle cx="16" cy="9" r="1.800" fill="#083"/><ellipse cx="22" cy="20" rx="9.500" ry="9" fill="#e8e8e8"/><path d="M27 27l1 4-5-2z" fill="#e8e8e8"/><circle cx="18.500" cy="18" r="1.300" fill="#666"/><circle cx="25.500" cy="18" r="1.300" fill="#666"/></svg>`],
      ['line', `<svg width="30" height="38" viewBox="0 0 30 38"><ellipse cx="15" cy="19" rx="14.500" ry="18.500" fill="#ee1c25"/><path d="M8 10v17M13 14v14M15 27c2-8 2-15 5-15 3 0 3 4 1 9M17 30l3-16M24 12v9" stroke="#fff" stroke-width="2.200" fill="none"/></svg>`],
      ['active', WH_LOGO(30, 31)],
      ['app', `<svg width="30" height="38" viewBox="0 0 30 38"><ellipse cx="15" cy="19" rx="14.500" ry="18.500" fill="#fff"/><path d="M8 11v11M12 13v9M16 7v15M20 11v11M24 14v8" stroke="#d12a2a" stroke-width="2"/><path d="M8 22v4M22 22v5" stroke="#2a9d2a" stroke-width="2"/></svg>`]
    ];
    this.shadowDOM.innerHTML = `
      <style>
        :host {
          display: flex;
          height: 50px;
          background: linear-gradient(90deg, #031c25, #03121f 60%, #020d1a);
          color: #fff;
          font: 15.500px ${FONT};
          position: relative;
        }
        .cell { width: 61.500px; height: 50px; display: flex; align-items: center; justify-content: center; box-sizing: border-box; flex: none; }
        .line { box-shadow: inset 0 -3px 0 #76b9ed; margin: 0; }
        .active { background: #33464f; box-shadow: inset 0 -3px 0 #76b9ed; }
        .app { background: #955b27; box-shadow: inset 0 -3px 0 #f27213; }
        .tray { margin-left: auto; display: flex; align-items: center; height: 50px; white-space: nowrap; }
        .clock { width: 76px; text-align: center; line-height: 23px; font-size: 16.400px; margin-right: 24.500px; }
        .mark {
          position: absolute; right: 16px; top: 25px; color: rgba(185, 185, 185, .75); font-size: 14.500px;
        }
      </style>
      ${cells.map(([c, svg]) => `<div class="cell ${c}">${svg}</div>`).join('')}
      <div class="tray">
        <svg width="16" height="10" viewBox="0 0 16 10" fill="none" stroke="#fff" style="margin-right:12px"><path d="M1 9l7-8 7 8"/></svg>
        <svg width="16" height="26" viewBox="0 0 16 26" style="margin-right:14px"><ellipse cx="8" cy="7" rx="5" ry="6" fill="#111"/><ellipse cx="8" cy="8" rx="3" ry="3.500" fill="#fff"/><rect x="3" y="11" width="10" height="10" rx="3" fill="#e60099"/><rect x="5" y="14" width="6" height="7" fill="#fff"/><path d="M8 1l3-1 1 3-3 1z" fill="#e60099"/><ellipse cx="5" cy="23" rx="3" ry="1.500" fill="#f90"/><ellipse cx="11" cy="23" rx="3" ry="1.500" fill="#f90"/></svg>
        <svg width="20" height="18" viewBox="0 0 20 18" fill="none" stroke="#fff" style="margin-right:11px"><path d="M1 1v4h3V1zM2.500 5v3"/><rect x="1.500" y="7.500" width="17" height="9" rx="1"/><rect x="3" y="9" width="12" height="6" fill="#fff"/></svg>
        <svg width="18" height="18" viewBox="0 0 18 18" fill="none" stroke="#bbb" style="margin-right:9px"><path d="M1 17A16 16 0 0 1 17 1M5 17A12 12 0 0 1 17 5M9 17a8 8 0 0 1 8-8M13 17a4 4 0 0 1 4-4"/></svg>
        <svg width="20" height="20" viewBox="0 0 20 20" fill="none" stroke="#ddd" style="margin-right:12px"><path d="M1 7h3l5-5v16l-5-5H1zM12 6a5 5 0 0 1 0 8M15 3a9 9 0 0 1 0 14"/></svg>
        <span style="font-size:18px;margin-right:14px">中</span>
        <div class="clock"><div>19:04</div><div>2022/5/12</div></div>
        <svg width="20" height="20" viewBox="0 0 20 20" style="margin:0 28px 0 0"><rect width="20" height="20" fill="#fff"/><path d="M3 3l11 7-11 7z" fill="#111"/></svg>
        <svg width="20" height="20" viewBox="0 0 20 20" fill="none" stroke="#eee" style="margin-right:32px"><rect x=".5" y=".5" width="19" height="19"/></svg>
      </div>
      <div class="mark">CSDN @yuge1023</div>`;
  }
}
customElements.define('task-bar', TaskBar);
</script>
</body>
</html>
